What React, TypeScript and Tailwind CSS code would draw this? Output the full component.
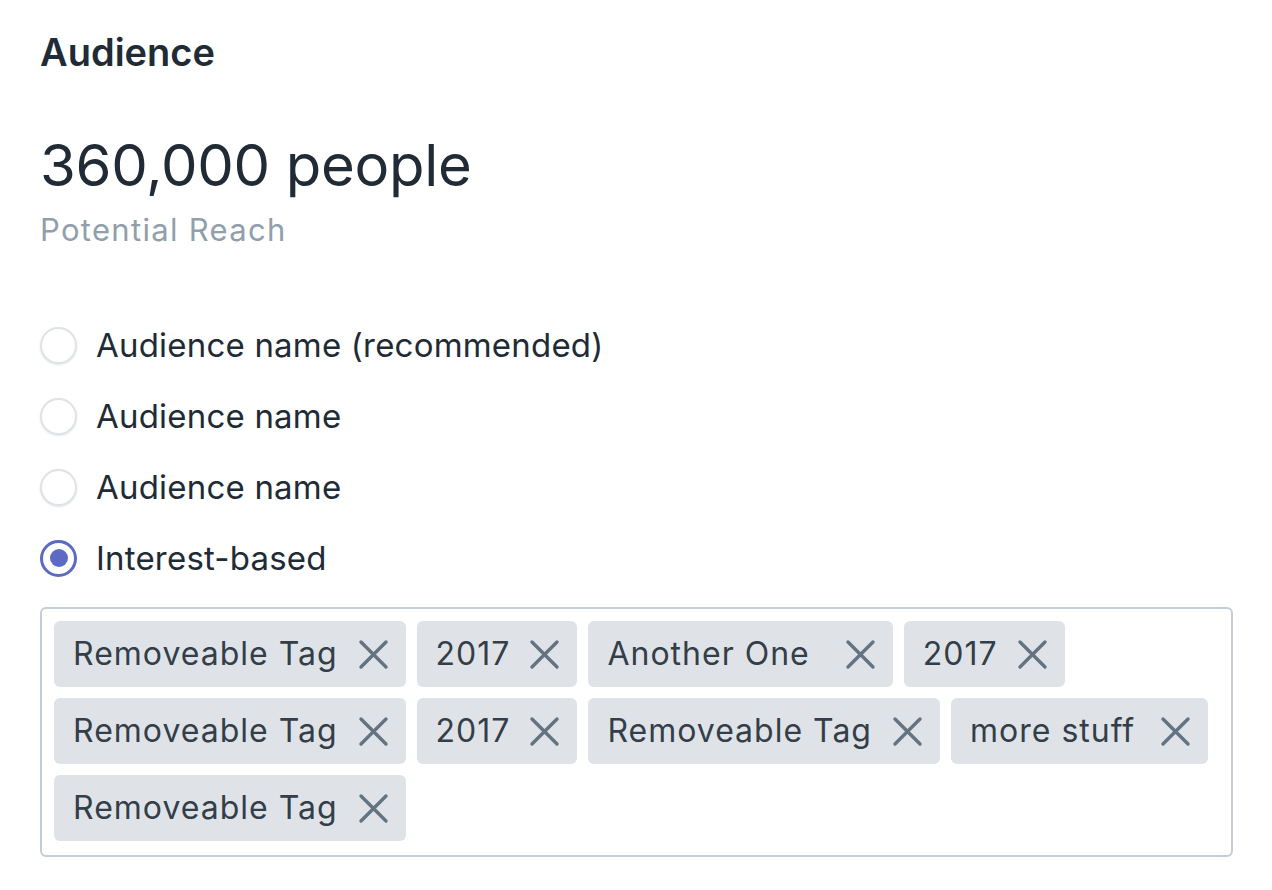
const options = [
  { label: 'Audience name (recommended)', checked: false },
  { label: 'Audience name', checked: false },
  { label: 'Audience name', checked: false },
  { label: 'Interest-based', checked: true },
];

const tags = [
  { label: 'Removeable Tag', gap: 'gap-[20px]' },
  { label: '2017', gap: 'gap-[19px]' },
  { label: 'Another One', gap: 'gap-[35px]' },
  { label: '2017', gap: 'gap-[19px]' },
  { label: 'Removeable Tag', gap: 'gap-[20px]' },
  { label: '2017', gap: 'gap-[19px]' },
  { label: 'Removeable Tag', gap: 'gap-[20px]' },
  { label: 'more stuff', gap: 'gap-[25px]' },
  { label: 'Removeable Tag', gap: 'gap-[20px]' },
];

function CloseIcon() {
  return (
    <svg width="31" height="31" viewBox="0 0 31 31" fill="none" className="shrink-0">
      <path d="M3 3L28 28M28 3L3 28" stroke="#637381" strokeWidth="3.4" strokeLinecap="round" />
    </svg>
  );
}

function Radio({ checked }: { checked: boolean }) {
  if (checked) {
    return (
      <span className="flex h-[37px] w-[37px] shrink-0 items-center justify-center rounded-full border-[3px] border-[#5c6ac4] bg-white">
        <span className="h-[18px] w-[18px] rounded-full bg-[#5c6ac4]" />
      </span>
    );
  }
  return (
    <span className="h-[37px] w-[37px] shrink-0 rounded-full border-2 border-[#dfe3e8] bg-white shadow-[0_1px_2px_rgba(99,115,129,0.2)]" />
  );
}

export default function App() {
  return (
    <div className="min-h-screen bg-white px-[40px] pt-[32px] font-['Inter',sans-serif] text-[#212b36]">
      {/* header */}
      <h2 className="text-[38px] font-semibold leading-[40px]">Audience</h2>

      <div className="mt-[61px] text-[58px] leading-[64px] tracking-[-0.3px]">360,000 people</div>
      <div className="mt-[15px] text-[31px] leading-[36px] tracking-[1.3px] text-[#919eab]">Potential Reach</div>

      {/* audience choices */}
      <div className="mt-[79px] flex flex-col gap-[35px]">
        {options.map((opt, i) => (
          <label key={i} className="flex h-[36px] items-center gap-[19px] text-[33px] leading-[36px] tracking-[0.2px]">
            <Radio checked={opt.checked} />
            <span>{opt.label}</span>
          </label>
        ))}
      </div>

      {/* tag input */}
      <div className="mt-[31px] flex w-[1193px] flex-wrap gap-[11px] rounded-[6px] border-2 border-[#c4cdd5] bg-white pt-[12px] pb-[14px] pl-[12px] pr-[6px]">
        {tags.map((tag, i) => (
          <span
            key={i}
            className={`flex h-[66px] items-center rounded-[6px] bg-[#dfe3e8] pl-[19px] pr-[17px] text-[32px] tracking-[1px] text-[#333e48] ${tag.gap}`}
          >
            <span>{tag.label}</span>
            <CloseIcon />
          </span>
        ))}
      </div>
    </div>
  );
}
